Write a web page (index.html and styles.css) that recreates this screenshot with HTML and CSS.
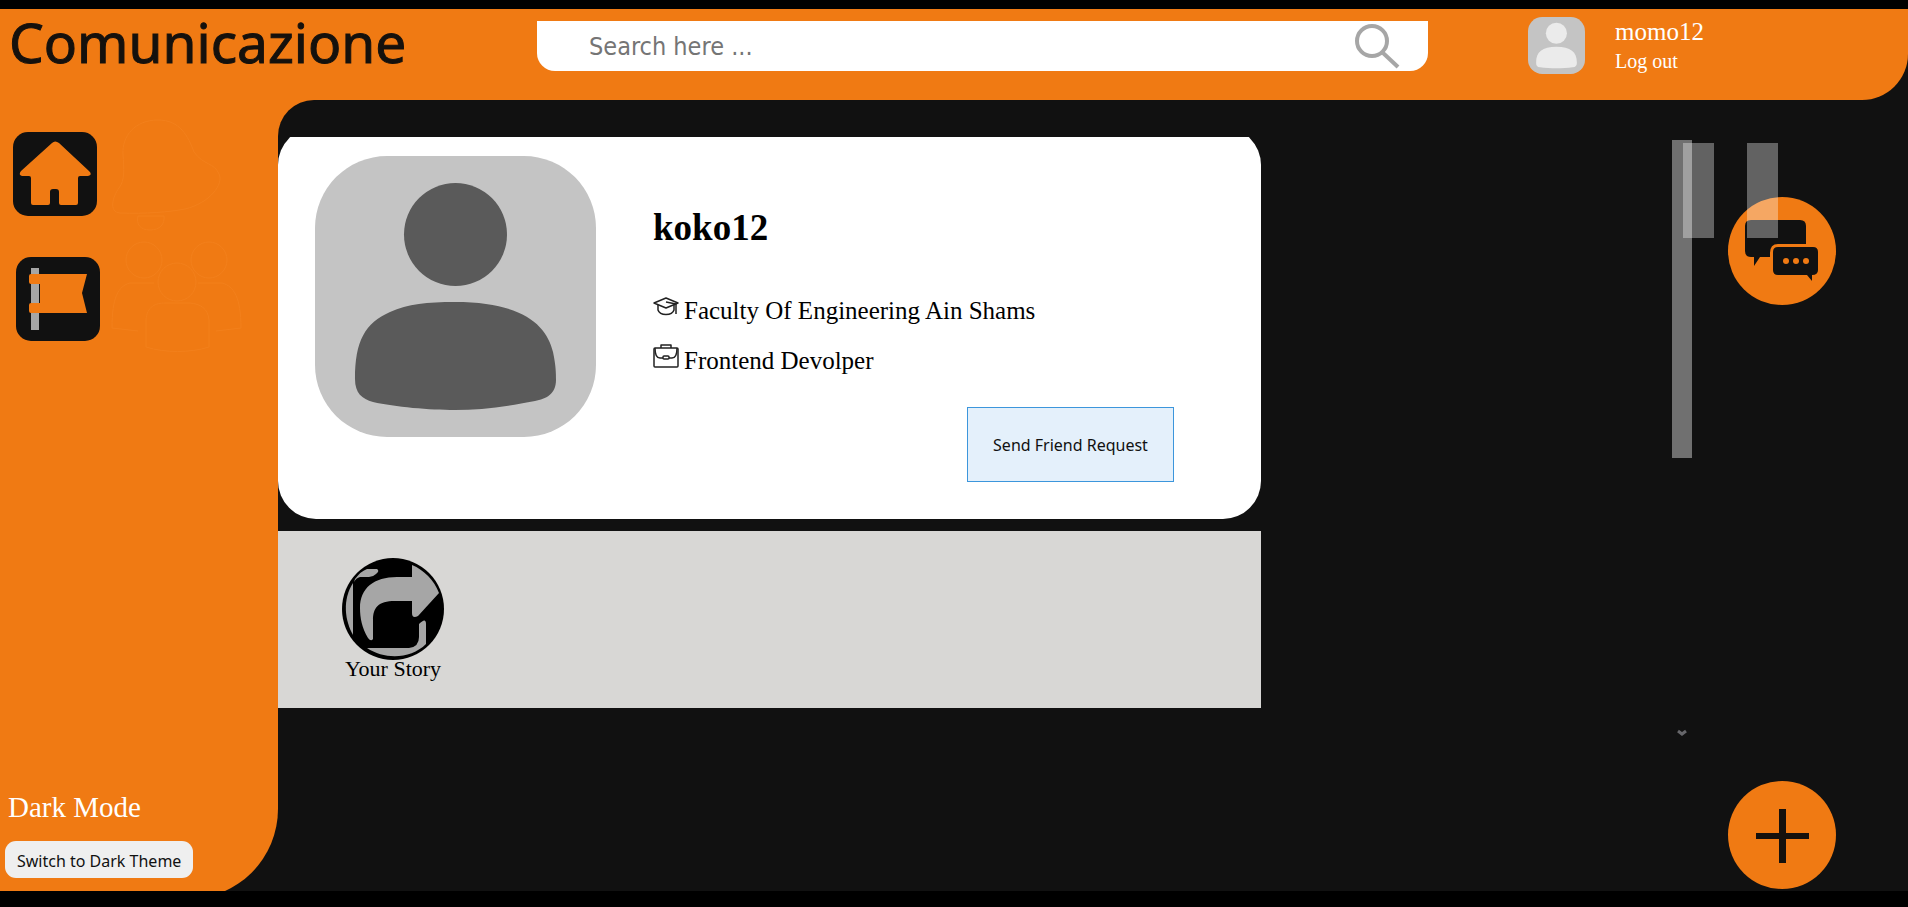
FILE: index.html
```html
<!DOCTYPE html>
<html lang="en">
<head>
<meta charset="utf-8">
<title>Comunicazione</title>
<link rel="stylesheet" href="styles.css">
</head>
<body>
<div class="app">
  <header class="topbar">
    <div class="brand">Comunicazione</div>
    <form class="search">
      <input class="search-input" type="text" placeholder="Search here ..." aria-label="Search">
      <button class="search-button" type="button" aria-label="Submit search">
        <svg viewBox="0 0 46 46" width="46" height="46"><g fill="none" stroke="#a6a6a6" stroke-width="4"><circle cx="18" cy="18" r="15"/><path d="M28 29 L44 44"/></g></svg>
      </button>
    </form>
    <div class="user">
      <svg class="user-avatar" viewBox="0 0 281 281"><rect width="281" height="281" rx="70" fill="#c4c4c4"/><g fill="#ebebeb"><circle cx="140" cy="80" r="52"/><path d="M140 147 C210 147 241 172 241 225 C241 240 235 246 220 248 C170 255 110 255 60 248 C45 246 40 240 40 225 C40 172 70 147 140 147Z"/></g></svg>
      <div class="user-text">
        <a class="user-name" href="#">momo12</a>
        <a class="logout" href="#">Log out</a>
      </div>
    </div>
  </header>

  <div class="layout">
    <nav class="sidebar">
      <div class="nav-row">
        <div class="nav-links">
          <a class="nav-link" href="#" aria-label="Home">
            <svg viewBox="0 0 84 84" width="84" height="84"><rect width="84" height="84" rx="15" fill="#111"/><path fill="#f07a13" d="M39 11 Q42 8 46 11 L76 39 Q80 43 75 44 H67 Q65 44 65 46 V71 Q65 73 63 73 H48 Q46 73 46 71 V60 Q46 57 43 57 H40 Q37 57 37 60 V71 Q37 73 35 73 H20 Q18 73 18 71 V46 Q18 44 16 44 H9 Q5 43 8 39Z"/></svg>
          </a>
          <a class="nav-link nav-pages" href="#" aria-label="Pages">
            <svg viewBox="0 0 84 84" width="84" height="84"><rect width="84" height="84" rx="15" fill="#111"/><path fill="#a6a6a6" d="M15 11 H23 V73 H15Z"/><path fill="#f07a13" d="M15 17 H71 L66 36 L71 56 H15 Q13 56 13 54 V48 Q13 46 15 46 H24 V27 H15 Q13 27 13 25 V19 Q13 17 15 17Z"/></svg>
          </a>
        </div>
        <svg class="nav-shadow" viewBox="0 0 136 240" width="136" height="240" aria-hidden="true"><g fill="none" stroke="#f3801b" stroke-width="1"><path d="M48 2 C25 2 12 18 13 36 C14 52 15 62 9 70 C3 78 -2 94 10 95 C35 96 60 94 75 91 C100 85 114 66 109 56 C104 44 94 48 84 34 C78 18 70 2 48 2Z"/><path d="M28 98 H54 C55 106 50 112 40 112 C30 112 26 106 28 98Z"/><circle cx="34" cy="142" r="18"/><circle cx="99" cy="142" r="18"/><circle cx="67" cy="164" r="19"/><path d="M44 165 H20 C8 168 2 180 2 210 L28 213 M88 165 H112 C124 168 131 180 131 210 L106 213 M36 229 V202 C37 188 46 185 55 185 H80 C90 186 98 190 99 202 V229 C80 235 55 235 36 229Z"/></g></svg>
      </div>
      <div class="theme">
        <span class="theme-label">Dark Mode</span>
        <button class="theme-button" type="button">Switch to Dark Theme</button>
      </div>
    </nav>

    <main class="content">
      <div class="feed">
        <section class="profile">
          <svg class="profile-photo" viewBox="0 0 281 281" role="img" aria-label="Profile photo"><rect width="281" height="281" rx="72" fill="#c4c4c4"/><g fill="#5a5a5a"><circle cx="140.500" cy="78.500" r="51.500"/><path d="M140 146 C209 146 232 170 238 196 C241 210 241 218 241 224 C241 238 231 243 220 245 C190 251 165 254 140 254 C115 254 80 251 58 246 C47 243 40 237 40 223 C40 185 50 167 75 156 C93 148 112 146 140 146Z"/></g></svg>
          <div class="profile-info">
            <h1 class="profile-name">koko12</h1>
            <p class="fact">
              <svg viewBox="0 0 26 26" width="26" height="26" aria-hidden="true"><g fill="none" stroke="#222" stroke-width="1.500" stroke-linejoin="round"><path d="M1 10 L13 5 L25 10 L13 15Z"/><path d="M5 12 V17 C7 23 19 23 21 17 V12 M13 9 L23 11 V21"/></g></svg>
              <span>Faculty Of Engineering Ain Shams</span>
            </p>
            <p class="fact">
              <svg viewBox="0 0 26 26" width="26" height="26" aria-hidden="true"><g fill="none" stroke="#222" stroke-width="1.500" stroke-linejoin="round"><rect x="1" y="5" width="24" height="19" rx="1"/><path d="M8 5 V2 H18 V5 M2 5 C2 12 4 15 7 15 H10 M24 5 C24 12 22 15 19 15 H16"/><rect x="10" y="13" width="6" height="3" rx="1"/></g></svg>
              <span>Frontend Devolper</span>
            </p>
            <button class="request-button" type="button">Send Friend Request</button>
          </div>
        </section>
        <section class="stories">
          <a class="story" href="#">
            <svg viewBox="0 0 102 102" width="102" height="102" aria-hidden="true"><circle cx="51" cy="51" r="51" fill="#000"/><g fill="#a6a6a6"><path d="M70 7 C82 12 92 22 97 35 L76 58 Q70 61 70 55 V43 H53 C36 43 31 50 31 62 V81 Q29 84 26 80 C20 70 18 60 18 50 C18 30 32 19 55 19 H70Z"/><path d="M11 25 V77 C3 63 0 42 11 25Z"/><path d="M13 21 Q19 13 25 11 H35 Q38 13 34 16 Q31 19 27 19 H18 Q14 20 12 24Z"/><path d="M25 90 H67 Q77 89 77 79 V66 Q84 59 84 66 V86 C69 101 43 102 25 90Z"/></g></svg>
            <span>Your Story</span>
          </a>
        </section>
      </div>

      <aside class="tools">
        <div class="scroll-track">
          <div class="scroll-thumb"></div>
          <svg viewBox="0 0 20 20" width="20" height="20" aria-hidden="true"><path d="M6 9 L10 12 L14 9" fill="none" stroke="#66666a" stroke-width="3"/></svg>
        </div>
        <div class="fabs">
          <button class="fab" type="button" aria-label="Messages">
            <svg viewBox="0 0 108 108" width="108" height="108"><g fill="#111"><path d="M23 23 H72 Q78 23 78 29 V47 H50 Q42 47 42 56 V60 H32 L26 69 V60 H23 Q17 60 17 54 V29 Q17 23 23 23Z"/><path d="M50 50 H85 Q90 50 90 55 V73 Q90 78 84 78 V84 L79 78 H50 Q45 78 45 73 V55 Q45 50 50 50Z"/></g><g fill="#f07a13"><circle cx="58" cy="64" r="3"/><circle cx="68" cy="64" r="3"/><circle cx="78" cy="64" r="3"/></g></svg>
          </button>
          <button class="fab" type="button" aria-label="New post">
            <svg viewBox="0 0 108 108" width="108" height="108"><path fill="#15110d" d="M51 28 H58 V52 H81 V58 H58 V82 H51 V58 H28 V52 H51Z"/></svg>
          </button>
        </div>
        <div class="pause" aria-hidden="true"><i></i><i></i></div>
      </aside>
    </main>
  </div>
</div>
</body>
</html>
```
FILE: styles.css
```css
* {
  box-sizing: border-box;
}

body {
  margin: 0;
  height: 100vh;
  padding: 9px 0 16px;
  background: #000;
  font-family: "Liberation Serif", "Times New Roman", serif;
}

svg {
  display: block;
}

a {
  color: inherit;
  text-decoration: none;
}

button {
  border: 0;
  padding: 0;
  background: none;
  color: #111;
  font-family: "Noto Sans", sans-serif;
  font-size: 16px;
}

.app {
  display: flex;
  flex-direction: column;
  height: 100%;
  background: #111;
}

.topbar {
  display: grid;
  grid-template-columns: 537fr 891fr 480fr;
  align-items: start;
  padding-bottom: 25px;
  background: #f07a13;
  border-bottom-right-radius: 46px;
}

.brand {
  padding-left: 9px;
  color: #15110d;
  font-family: "Noto Sans", sans-serif;
  font-size: 55px;
  line-height: 66px;
  -webkit-text-stroke: 1px #15110d;
}

.search {
  display: flex;
  align-items: center;
  height: 50px;
  margin-top: 12px;
  padding: 0 28px 0 52px;
  background: #fff;
  border-radius: 0 0 18px 18px;
}

.search-input {
  flex: 1;
  min-width: 0;
  padding: 0;
  border: 0;
  outline: 0;
  background: none;
  font-family: "DejaVu Sans Condensed", "Noto Sans", sans-serif;
  font-size: 25px;
}

.search-input::placeholder {
  color: #757575;
}

.user {
  display: flex;
  gap: 30px;
  padding: 8px 0 0 100px;
  color: #fff;
}

.user-avatar {
  width: 57px;
  height: 57px;
}

.user-text {
  display: flex;
  flex-direction: column;
}

.user-name {
  font-size: 25px;
  line-height: 30px;
}

.logout {
  font-size: 20px;
  line-height: 28px;
}

.layout {
  flex: 1;
  display: grid;
  grid-template-columns: 278px 1fr;
  min-height: 0;
  overflow: hidden;
  background: linear-gradient(#f07a13, #f07a13) no-repeat 0 0 / 320px 60px;
}

.sidebar {
  display: flex;
  flex-direction: column;
  justify-content: space-between;
  margin-bottom: -8px;
  padding: 18px 0 21px 5px;
  background: #f07a13;
  border-bottom-right-radius: 90px;
}

.nav-row {
  display: flex;
  gap: 10px;
}

.nav-links {
  display: flex;
  flex-direction: column;
  gap: 41px;
  padding: 14px 0 0 8px;
}

.nav-pages {
  padding-left: 3px;
}

.theme {
  display: flex;
  flex-direction: column;
  align-items: flex-start;
  gap: 17px;
}

.theme-label {
  padding-left: 3px;
  color: #fff;
  font-size: 29px;
  line-height: 34px;
}

.theme-button {
  height: 37px;
  padding: 2px 12px 0;
  background: #efefef;
  border-radius: 11px;
}

.content {
  display: grid;
  grid-template-columns: 983fr 647fr;
  min-height: 0;
  background: #111;
  border-top-left-radius: 36px;
}

.feed {
  display: flex;
  flex-direction: column;
  gap: 12px;
  margin-top: 37px;
  overflow: hidden;
}

.profile {
  display: flex;
  gap: 57px;
  margin-top: -10px;
  padding: 29px 37px 28px;
  background: #fff;
  border-radius: 38px;
}

.profile-photo {
  flex: none;
  width: 281px;
  height: 281px;
}

.profile-info {
  flex: 1;
  display: flex;
  flex-direction: column;
  padding-top: 50px;
}

.profile-name {
  margin: 0 0 46px;
  font-size: 37px;
  line-height: 44px;
}

.fact {
  display: flex;
  align-items: flex-start;
  gap: 5px;
  margin: 0 0 20px;
  font-size: 25px;
  line-height: 30px;
}

.fact svg {
  margin-top: -3px;
}

.request-button {
  align-self: flex-end;
  width: 207px;
  height: 75px;
  margin: 11px 50px 9px 0;
  background: #e4f0fb;
  border: 1px solid #3c96dc;
}

.stories {
  padding: 27px 64px;
  background: #d8d7d5;
}

.story {
  display: inline-flex;
  flex-direction: column;
  align-items: center;
  font-size: 22px;
  line-height: 24px;
}

.story svg {
  margin-bottom: -3px;
}

.tools {
  position: relative;
  display: flex;
  justify-content: flex-end;
  gap: 36px;
  padding-right: 72px;
}

.scroll-track {
  display: flex;
  flex-direction: column;
  justify-content: space-between;
  width: 20px;
  margin: 40px 0 149px;
}

.scroll-thumb {
  height: 318px;
  background: #707070;
}

.fabs {
  display: flex;
  flex-direction: column;
  justify-content: space-between;
  padding: 97px 0 2px;
}

.fab {
  width: 108px;
  height: 108px;
  background: #f07a13;
  border-radius: 50%;
}

.pause {
  position: absolute;
  top: 43px;
  right: 130px;
  display: flex;
  gap: 33px;
}

.pause i {
  width: 31px;
  height: 95px;
  background: rgba(255, 255, 255, 0.34);
}
```
